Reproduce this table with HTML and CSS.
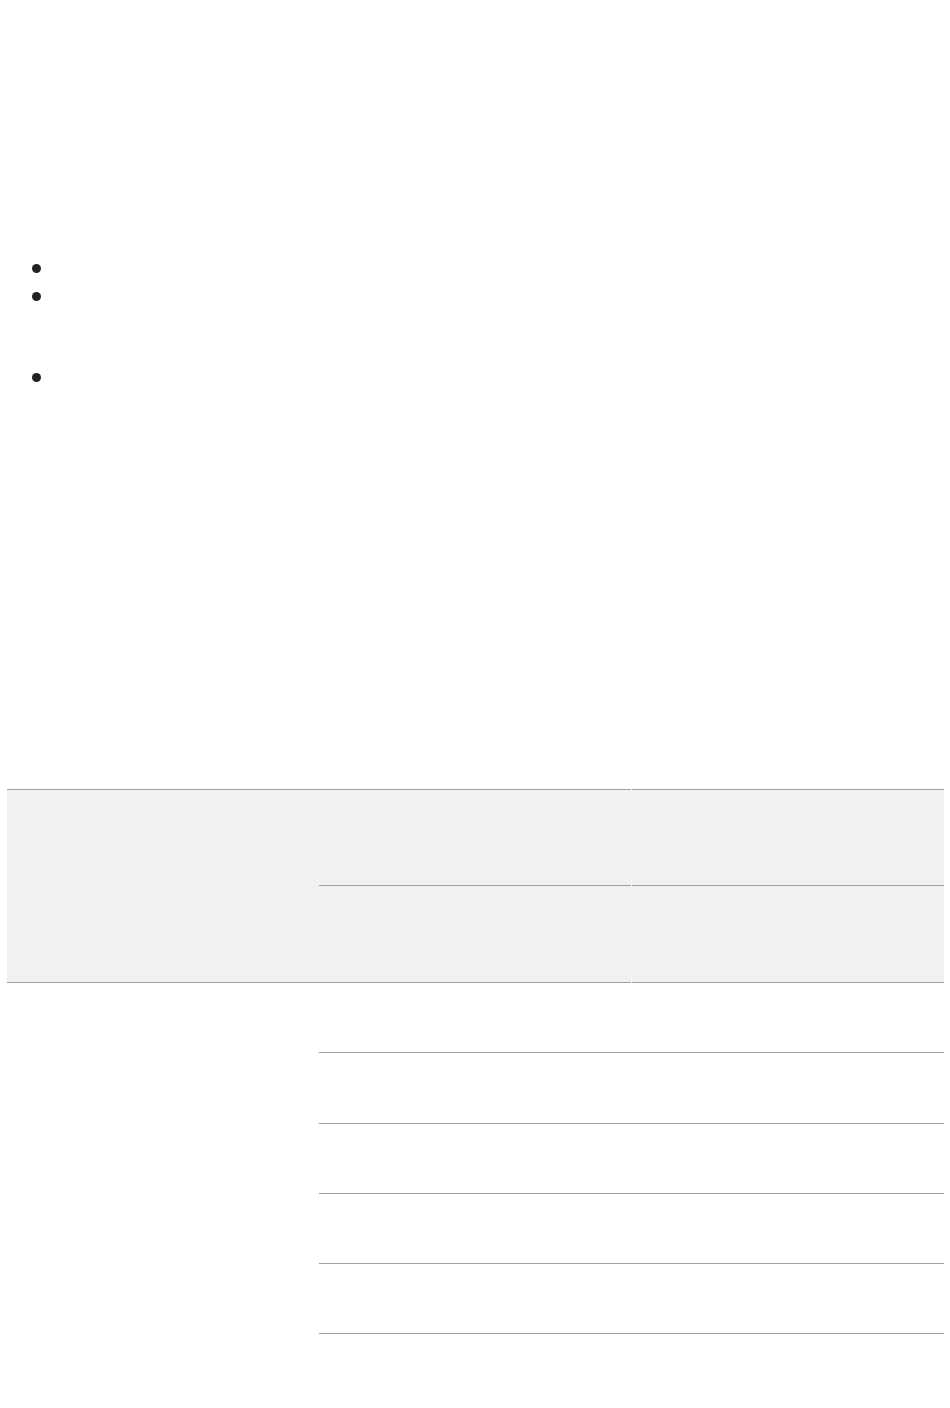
FILE: index.html
```html
<!DOCTYPE html>
<html lang="en">
<head>
    <meta charset="UTF-8">
    <meta name="viewport" content="width=device-width, initial-scale=1.0">
    <title>Document</title>
    <link rel="stylesheet" href="styles.css">
</head>
<body>
    <div class="page">
        <div class="lead"></div>

        <ul class="points">
            <li></li>
            <li></li>
        </ul>

        <ul class="points points-last">
            <li></li>
        </ul>

        <div class="spacer"></div>

        <table class="grid">
            <thead>
                <tr class="head-row">
                    <th rowspan="2" class="first-col"></th>
                    <th></th>
                    <th class="last-col"></th>
                </tr>
                <tr class="head-row">
                    <th class="sub"></th>
                    <th class="sub last-col"></th>
                </tr>
            </thead>
            <tbody>
                <tr>
                    <td rowspan="6" class="first-col"></td>
                    <td></td>
                    <td></td>
                </tr>
                <tr><td></td><td></td></tr>
                <tr><td></td><td></td></tr>
                <tr><td></td><td></td></tr>
                <tr><td></td><td></td></tr>
                <tr><td></td><td></td></tr>
            </tbody>
        </table>
    </div>
</body>
</html>
```

FILE: styles.css
```css
body {
    font-family: "Liberation Sans", Arial, sans-serif;
    font-size: 18px;
    line-height: 28px;
    color: #222;
    margin: 0;
    background: #fff;
}
.page {
    padding: 0 6px 0 7px;
}
.lead {
    height: 254px;
}
.points {
    margin: 0;
    padding-left: 50px;
    font-size: 30px;
}
.points li {
    height: 28px;
}
.points-last {
    margin-top: 53px;
}
.spacer {
    height: 398px;
}
.grid {
    width: 937px;
    border-collapse: collapse;
    table-layout: fixed;
    border-top: 1px solid #a0a0a0;
}
.grid thead {
    border-bottom: 1px solid #a0a0a0;
}
.grid th,
.grid td {
    padding: 0;
    width: 312px;
}
.grid thead th {
    background: #f1f1f1;
    height: 95px;
}
.grid thead th.last-col {
    border-left: 1px solid #f4f4f4;
}
.grid thead th.sub {
    height: 96px;
    border-top: 1px solid #a0a0a0;
}
.grid tbody td {
    height: 69.25px;
    border-bottom: 1px solid #a0a0a0;
}
.grid tbody td.first-col {
    border-bottom: none;
}
.grid tbody tr:last-child td {
    height: 80px;
    border-bottom: none;
}
```
